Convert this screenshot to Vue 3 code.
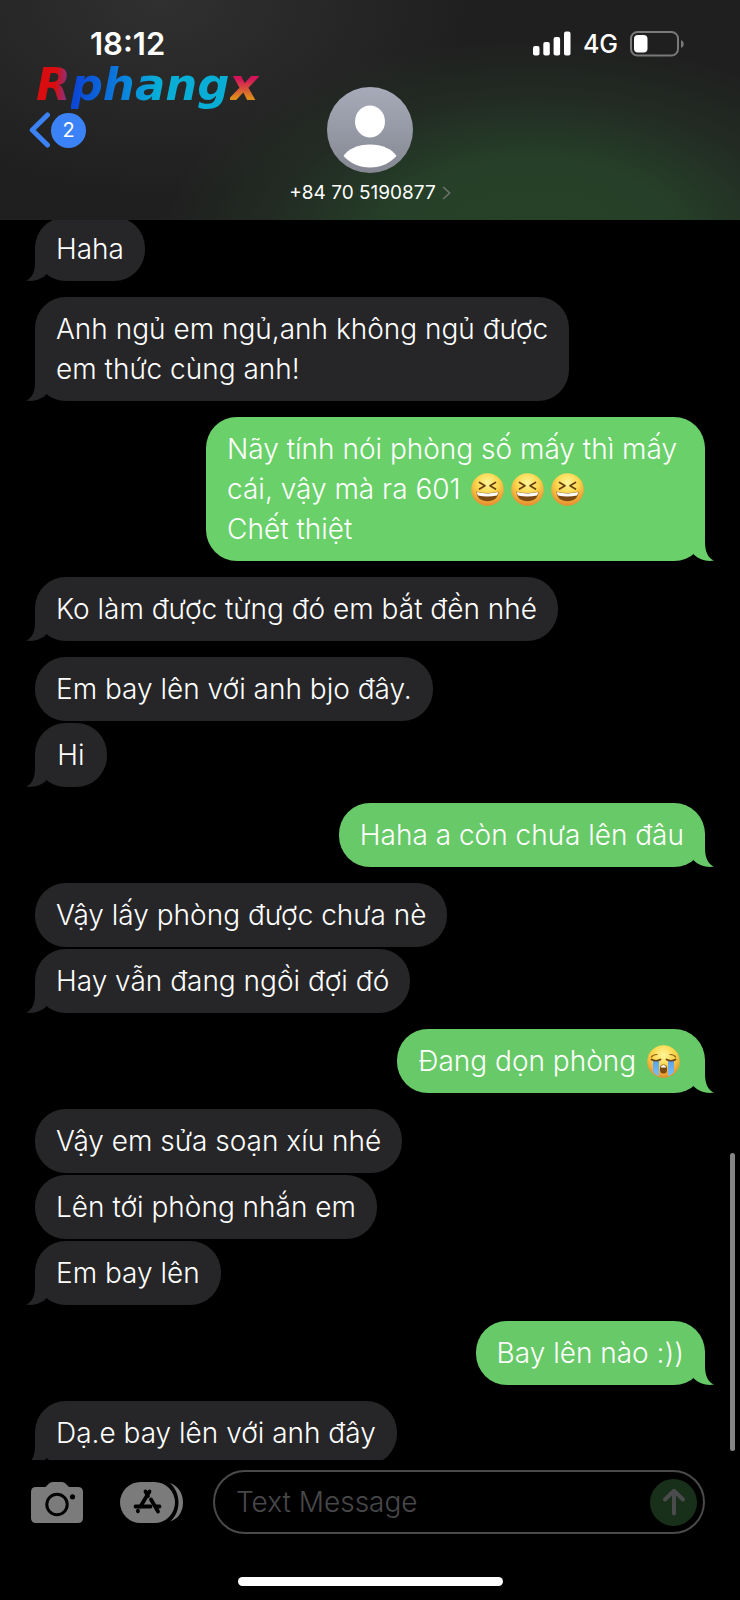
<script setup>
const messages = [
  { side: 'in', tail: true, lines: [['Haha']] },
  { side: 'in', tail: true, lines: [['Anh ngủ em ngủ,anh không ngủ được'], ['em thức cùng anh!']] },
  {
    side: 'out',
    tail: true,
    long: true,
    lines: [
      ['Nãy tính nói phòng số mấy thì mấy'],
      ['cái, vậy mà ra 601 ', ':laugh', ':laugh', ':laugh'],
      ['Chết thiệt'],
    ],
  },
  { side: 'in', tail: true, lines: [['Ko làm được từng đó em bắt đền nhé']] },
  { side: 'in', lines: [['Em bay lên với anh bjo đây.']] },
  { side: 'in', tail: true, lines: [['Hi']] },
  { side: 'out', tail: true, lines: [['Haha a còn chưa lên đâu']] },
  { side: 'in', lines: [['Vậy lấy phòng được chưa nè']] },
  { side: 'in', tail: true, lines: [['Hay vẫn đang ngồi đợi đó']] },
  { side: 'out', tail: true, lines: [['Đang dọn phòng ', ':cry']] },
  { side: 'in', lines: [['Vậy em sửa soạn xíu nhé']] },
  { side: 'in', lines: [['Lên tới phòng nhắn em']] },
  { side: 'in', tail: true, lines: [['Em bay lên']] },
  { side: 'out', tail: true, lines: [['Bay lên nào :))']] },
  { side: 'in', tail: true, lines: [['Dạ.e bay lên với anh đây']] },
]
</script>

<template>
  <div class="phone">
    <svg class="defs" aria-hidden="true">
      <defs>
        <radialGradient id="face" cx="50%" cy="30%" r="70%">
          <stop offset="0" stop-color="#fff79a" />
          <stop offset="0.5" stop-color="#fbd54b" />
          <stop offset="1" stop-color="#e58a2c" />
        </radialGradient>
        <linearGradient id="tears" x1="0" y1="0" x2="0" y2="1">
          <stop offset="0" stop-color="#5aa0ea" />
          <stop offset="1" stop-color="#7cc0f5" />
        </linearGradient>
      </defs>
    </svg>

    <header class="header">
      <div class="status">
        <span class="time">18:12</span>
        <div class="signals">
          <svg width="38" height="25" viewBox="0 0 38 25" role="img" aria-label="Signal strength">
            <g fill="#fff">
              <rect x="0" y="15" width="6.5" height="9.5" rx="2" />
              <rect x="10.3" y="11" width="6.5" height="13.5" rx="2" />
              <rect x="20.6" y="6" width="6.5" height="18.5" rx="2" />
              <rect x="31" y="0.5" width="6.5" height="24" rx="2" />
            </g>
          </svg>
          <span class="network">4G</span>
          <svg width="55" height="26" viewBox="0 0 55 26" role="img" aria-label="Battery">
            <rect x="1" y="1" width="47" height="23.5" rx="6.5" fill="none" stroke="#777a77" stroke-width="2" />
            <rect x="4" y="4" width="13.5" height="17.5" rx="4" fill="#fff" />
            <path d="M51 9.2 C54.6 10.2 54.6 15.8 51 16.8 Z" fill="#777a77" />
          </svg>
        </div>
      </div>

      <div class="nav">
        <button class="back" type="button" aria-label="Back, 2 unread">
          <svg width="22" height="36" viewBox="0 0 22 36" aria-hidden="true">
            <path d="M18.5 3 L3.2 18 L18.5 33" fill="none" stroke="#3b82f7" stroke-width="5" stroke-linecap="round" stroke-linejoin="round" />
          </svg>
          <span class="badge">2</span>
        </button>
        <button class="contact" type="button">
          <svg width="86" height="86" viewBox="0 0 86 86" aria-hidden="true">
            <defs>
              <linearGradient id="avatar" x1="0" y1="0" x2="0" y2="1">
                <stop offset="0" stop-color="#a7abb9" />
                <stop offset="1" stop-color="#858892" />
              </linearGradient>
            </defs>
            <circle cx="43" cy="43" r="43" fill="url(#avatar)" />
            <ellipse cx="43" cy="34.5" rx="15" ry="16" fill="#fff" />
            <path d="M16.5 69 C21 62 31 57.5 43 57.5 C55 57.5 65 62 69.5 69 C63 76 54 80.5 43 80.5 C32 80.5 23 76 16.5 69 Z" fill="#fff" />
          </svg>
          <span class="number">
            +84 70 5190877
            <svg width="9" height="14" viewBox="0 0 9 14" aria-hidden="true">
              <path d="M1.2 1 L7.6 7 L1.2 13" fill="none" stroke="#6b746c" stroke-width="1.6" />
            </svg>
          </span>
        </button>
      </div>

      <div class="watermark"><span class="mark-r">R</span><span class="mark-mid">phang</span><span class="mark-x">x</span></div>
    </header>

    <main class="thread">
      <div class="list">
        <div
          v-for="(m, i) in messages"
          :key="i"
          class="bubble"
          :class="[m.side, { last: m.tail, long: m.long }]"
        >
          <p v-for="(line, j) in m.lines" :key="j" class="line">
            <template v-for="(part, k) in line" :key="k">
              <svg v-if="part === ':laugh'" class="emoji" viewBox="0 0 33 33" role="img" aria-label="😆">
                <circle cx="16.5" cy="16.5" r="16.3" fill="url(#face)" />
                <path d="M8.5 9.5 L14 12.8 L8.5 16 M24.5 9.5 L19 12.8 L24.5 16" fill="none" stroke="#69400f" stroke-width="1.7" stroke-linecap="round" stroke-linejoin="round" />
                <path d="M5.5 18.5 Q16.5 21.5 27.5 18.5 C27.5 24.5 23 28.3 16.5 28.3 C10 28.3 5.5 24.5 5.5 18.5 Z" fill="#7b4a12" />
                <path d="M6 19 Q16.5 21.8 27 19 C27 20.5 26.6 21.6 26 22.4 Q16.5 24.4 7 22.4 C6.4 21.6 6 20.5 6 19 Z" fill="#fff" />
              </svg>
              <svg v-else-if="part === ':cry'" class="emoji" viewBox="0 0 33 33" role="img" aria-label="😭">
                <circle cx="16.5" cy="16.5" r="16.3" fill="url(#face)" />
                <path d="M6 15 H12 V31 Q8.5 30 6 27 Z M21 15 H27 V27 Q24.5 30 21 31 Z" fill="url(#tears)" />
                <path d="M4.5 14.5 Q9 17 13.5 14.5 M19.5 14.5 Q24 17 28.5 14.5" fill="none" stroke="#69400f" stroke-width="1.7" stroke-linecap="round" />
                <path d="M4.5 12 Q6 9.5 10 9.5 M28.5 12 Q27 9.5 23 9.5" fill="none" stroke="#8a5a18" stroke-width="1.2" stroke-linecap="round" />
                <rect x="13" y="19.5" width="7" height="9" rx="3.5" fill="#7b4a12" />
                <path d="M13.7 22.5 Q14 20 16.5 20 Q19 20 19.3 22.5 Z" fill="#fff" />
              </svg>
              <template v-else>{{ part }}</template>
            </template>
          </p>
          <svg v-if="m.tail" class="tail" width="24" height="34" viewBox="0 0 24 34" aria-hidden="true">
            <path d="M9 0 V15 C9 25 6 31 0 33.6 C8 34.8 15 32.5 20.3 27.5 L22 2 Z" fill="currentColor" />
          </svg>
        </div>
      </div>
      <div class="scrollbar"></div>
    </main>

    <footer class="footer">
      <form class="composer" @submit.prevent>
        <button class="tool" type="button" aria-label="Camera">
          <svg width="52" height="41" viewBox="0 0 52 41" aria-hidden="true">
            <path d="M5 5 H14.5 L18 1.5 Q19.3 0 21.5 0 H31 Q33 0 34.5 1.5 L38 5 H47 Q52 5 52 10 V36 Q52 41 47 41 H5 Q0 41 0 36 V10 Q0 5 5 5 Z" fill="#7b7b7b" />
            <circle cx="26" cy="22.5" r="10.2" fill="none" stroke="#000" stroke-width="3" />
            <circle cx="41.5" cy="14.8" r="2.6" fill="#000" />
          </svg>
        </button>
        <button class="tool apps" type="button" aria-label="Apps">
          <svg width="63" height="41" viewBox="0 0 63 41" aria-hidden="true">
            <rect x="0" y="0" width="55" height="41" rx="20.5" fill="#7b7b7b" />
            <path d="M50 1 C58 4 63 11 63 20.5 C63 30 58 37 50 39.5 C55.5 35 58.5 28 58.5 20.5 C58.5 13 55.5 6 50 1 Z" fill="#7b7b7b" />
            <g fill="none" stroke="#000" stroke-width="3.8" stroke-linecap="round">
              <path d="M25.5 9.5 L28 14 M29.5 9.5 L20.5 24.5 M31 17.5 L38 29.5" />
              <path d="M15.5 24.5 H30.5 M36.5 24.5 H39.5 M18 28.8 L17.8 29.3" />
            </g>
          </svg>
        </button>
        <div class="field">
          <input class="text" type="text" placeholder="Text Message" aria-label="Text Message" />
          <button class="send" type="submit" aria-label="Send">
            <svg width="24" height="28" viewBox="0 0 24 28" aria-hidden="true">
              <path d="M12 25.5 V3 M3 11.5 L12 2.8 L21 11.5" fill="none" stroke="#4b4b4d" stroke-width="4" stroke-linecap="round" stroke-linejoin="round" />
            </svg>
          </button>
        </div>
      </form>
      <div class="home"></div>
    </footer>
  </div>
</template>

<style>
body {
  background: #000;
}
</style>

<style scoped>
.phone {
  display: flex;
  flex-direction: column;
  height: 100vh;
  overflow: hidden;
  background: #000;
  color: #fff;
  font-family: Inter, "Noto Sans", sans-serif;
}
.defs {
  position: absolute;
  width: 0;
  height: 0;
}
button {
  border: 0;
  padding: 0;
  background: none;
  color: inherit;
  font: inherit;
}
svg {
  display: block;
  flex: none;
}

.header {
  position: relative;
  flex: none;
  padding-bottom: 16px;
  background:
    radial-gradient(ellipse 50% 90% at 72% 108%, #274229 0%, #263f28 40%, rgba(36, 52, 38, 0.6) 70%, rgba(31, 31, 31, 0) 100%),
    radial-gradient(ellipse 42% 90% at 22% 0%, #303030 0%, rgba(31, 31, 31, 0) 100%),
    #1f1f1f;
}
.status {
  display: flex;
  align-items: center;
  justify-content: space-between;
  height: 87px;
  padding: 0 55px 0 90px;
  box-sizing: border-box;
}
.time {
  font-size: 31px;
  font-weight: 600;
  line-height: 32px;
}
.signals {
  display: flex;
  align-items: center;
  gap: 12px;
}
.network {
  font-size: 25px;
  font-weight: 500;
}
.nav {
  display: grid;
  grid-template-columns: 1fr auto 1fr;
  align-items: start;
}
.back {
  display: flex;
  align-items: center;
  justify-self: start;
  height: 86px;
  padding-left: 29px;
}
.badge {
  width: 35px;
  height: 35px;
  border-radius: 50%;
  background: #3b82f7;
  font-size: 20px;
  line-height: 35px;
  text-align: center;
}
.contact {
  display: flex;
  flex-direction: column;
  align-items: center;
  gap: 8px;
}
.number {
  display: flex;
  align-items: center;
  gap: 6px;
  font-size: 19px;
  line-height: 23px;
}
.watermark {
  position: absolute;
  left: 36px;
  top: 60px;
  font-family: "DejaVu Sans", sans-serif;
  font-size: 45px;
  font-style: italic;
  font-weight: 700;
  line-height: 50px;
  white-space: nowrap;
}
.watermark span {
  background-clip: text;
  -webkit-background-clip: text;
  color: transparent;
}
.mark-r {
  background-image: linear-gradient(95deg, #d90d10 55%, #6a3fae 95%);
}
.mark-mid {
  background-image: linear-gradient(95deg, #0c48d6 5%, #0b7fdc 32%, #08aed6 55%);
}
.mark-x {
  background-image: linear-gradient(180deg, #d4145a 40%, #dd8b1c 75%);
}

.thread {
  position: relative;
  flex: 1;
  min-height: 0;
  overflow: hidden;
}
.list {
  display: flex;
  flex-direction: column;
  margin-top: -3px;
  padding: 0 35px;
}
.bubble {
  position: relative;
  display: grid;
  align-self: flex-start;
  justify-content: center;
  min-width: 72px;
  margin-bottom: 2px;
  padding: 12px 21px;
  border-radius: 31px;
  box-sizing: border-box;
  font-size: 28px;
  font-weight: 350;
  line-height: 40px;
}
.line {
  display: flex;
  align-items: center;
  margin: 0;
  white-space: pre;
}
.in {
  background: #262628;
  color: #262628;
}
.out {
  align-self: flex-end;
  background: #67c967;
  color: #67c967;
}
.long {
  padding-right: 28px;
  background: #6ad06a;
  color: #6ad06a;
}
.bubble .line {
  color: #fff;
}
.last {
  margin-bottom: 16px;
}
.tail {
  position: absolute;
  left: -9px;
  bottom: 0;
}
.out .tail {
  right: -9px;
  left: auto;
  transform: scaleX(-1);
}
.emoji {
  width: 33px;
  height: 33px;
  margin: 0 4px 0 3px;
}
.scrollbar {
  position: absolute;
  right: 5px;
  bottom: 9px;
  width: 5px;
  height: 24%;
  border-radius: 3px;
  background: #858585;
}

.footer {
  flex: none;
  padding: 10px 0 14px;
}
.composer {
  display: flex;
  align-items: center;
  padding: 0 35px 0 31px;
}
.apps {
  margin: 0 30px 0 37px;
}
.field {
  display: flex;
  flex: 1;
  align-items: center;
  min-width: 0;
  height: 64px;
  padding: 0 6px 0 21px;
  border: 2px solid #4a4a4a;
  border-radius: 32px;
  box-sizing: border-box;
}
.text {
  flex: 1;
  min-width: 0;
  padding: 0;
  border: 0;
  outline: 0;
  background: none;
  color: #fff;
  font: inherit;
  font-size: 28px;
  font-weight: 350;
}
.text::placeholder {
  color: #48484a;
  opacity: 1;
}
.send {
  display: flex;
  align-items: center;
  justify-content: center;
  width: 47px;
  height: 47px;
  border-radius: 50%;
  background: #18301a;
}
.home {
  width: 265px;
  height: 9px;
  margin: 43px auto 0;
  border-radius: 5px;
  background: #fff;
}
</style>
